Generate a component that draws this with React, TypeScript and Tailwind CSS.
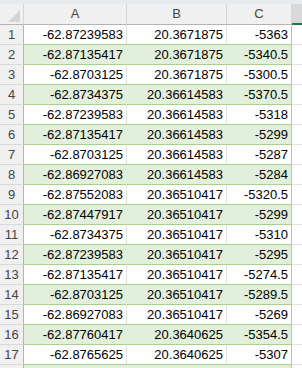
import React from 'react';

const rows: [string, string, string][] = [
  ['-62.87239583', '20.3671875', '-5363'],
  ['-62.87135417', '20.3671875', '-5340.5'],
  ['-62.8703125', '20.3671875', '-5300.5'],
  ['-62.8734375', '20.36614583', '-5370.5'],
  ['-62.87239583', '20.36614583', '-5318'],
  ['-62.87135417', '20.36614583', '-5299'],
  ['-62.8703125', '20.36614583', '-5287'],
  ['-62.86927083', '20.36614583', '-5284'],
  ['-62.87552083', '20.36510417', '-5320.5'],
  ['-62.87447917', '20.36510417', '-5299'],
  ['-62.8734375', '20.36510417', '-5310'],
  ['-62.87239583', '20.36510417', '-5295'],
  ['-62.87135417', '20.36510417', '-5274.5'],
  ['-62.8703125', '20.36510417', '-5289.5'],
  ['-62.86927083', '20.36510417', '-5269'],
  ['-62.87760417', '20.3640625', '-5354.5'],
  ['-62.8765625', '20.3640625', '-5307'],
];

function Row({ n, cells }: { n: number; cells?: [string, string, string] }) {
  const banded = n % 2 === 0;
  const cellBg = banded ? 'bg-[#e2efda]' : 'bg-white';
  const divider = banded ? 'border-[#e2efda]' : 'border-[#e1e1e1]';
  return (
    <div className="flex h-[20px] shrink-0">
      <div className="w-[24px] shrink-0 flex items-center justify-center bg-[#f0f0f0] border-r border-r-[#b4b4b4] border-b border-b-[#d9d9d9] text-[13px] text-[#444]">
        {cells ? n : null}
      </div>
      <div className={`w-[103px] shrink-0 flex items-center justify-end pr-[3px] pt-[1px] border-r ${divider} border-b border-b-[#a9d08e] ${cellBg}`}>
        {cells?.[0]}
      </div>
      <div className={`w-[100px] shrink-0 flex items-center justify-end pr-[3px] pt-[1px] border-r ${divider} border-b border-b-[#a9d08e] ${cellBg}`}>
        {cells?.[1]}
      </div>
      <div className={`w-[65px] shrink-0 flex items-center justify-end pr-[3px] pt-[1px] border-r border-r-[#a9d08e] border-b border-b-[#a9d08e] ${cellBg}`}>
        {cells?.[2]}
      </div>
      <div className="flex-1 bg-white border-b border-b-[#e1e1e1]" />
    </div>
  );
}

export default function App() {
  return (
    <div
      className="w-[302px] h-[368px] overflow-hidden bg-white flex flex-col text-[13px] text-black"
      style={{ fontFamily: '"Liberation Sans", Arial, sans-serif' }}
    >
      <div className="h-[4px] shrink-0 bg-[#e8ebee]" />
      {/* Column headers */}
      <div className="flex h-[21px] shrink-0 text-[#444]">
        <div className="w-[24px] shrink-0 bg-[#f0f0f0] border-r border-r-[#d4d4d4] border-b border-b-[#b4b4b4] flex items-end justify-end pr-[3px] pb-[2px]">
          <svg width="12" height="12" viewBox="0 0 12 12">
            <polygon points="12,0 12,12 0,12" fill="#d4d4d4" />
          </svg>
        </div>
        <div className="w-[103px] shrink-0 bg-[#f0f0f0] border-r border-r-[#d4d4d4] border-b border-b-[#b4b4b4] flex items-center justify-center">
          A
        </div>
        <div className="w-[100px] shrink-0 bg-[#f0f0f0] border-r border-r-[#d4d4d4] border-b border-b-[#b4b4b4] flex items-center justify-center">
          B
        </div>
        <div className="w-[65px] shrink-0 bg-[#f0f0f0] border-r border-r-[#d4d4d4] border-b border-b-[#b4b4b4] flex items-center justify-center">
          C
        </div>
        <div className="flex-1 bg-[#d9d9d9] border-b-2 border-b-[#217346]" />
      </div>
      {rows.map((r, i) => (
        <Row key={i} n={i + 1} cells={r} />
      ))}
      {/* partially visible row 18 */}
      <Row n={18} />
    </div>
  );
}
